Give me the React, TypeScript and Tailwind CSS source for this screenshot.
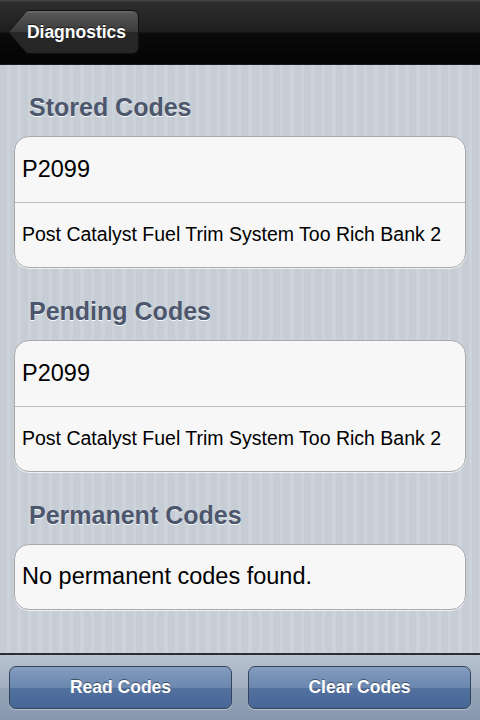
import React from "react";

const font = { fontFamily: '"Liberation Sans", Arial, sans-serif' };

function Section({ title, rows, first }: { title: string; rows: { text: string; size: "big" | "small" }[]; first?: boolean }) {
  const single = rows.length === 1;
  return (
    <div className="flex flex-col">
      <div className={`${first ? "h-[71px] pt-[28px]" : "h-[72px] pt-[29px]"} flex items-start pl-[29px]`}>
        <span className="text-[25px] leading-[28px] font-bold text-[#4c566c] [text-shadow:0_1px_0_rgba(255,255,255,0.9)]">{title}</span>
      </div>
      <div className="mx-[14px] rounded-[15px] border border-[#a7aaae] bg-[#f7f7f7] shadow-[0_1px_0_rgba(255,255,255,0.7)] overflow-hidden">
        {rows.map((r, i) => (
          <div
            key={i}
            className={`${i > 0 ? "h-[65px] border-t border-[#bcbcbc]" : single ? "h-[64px]" : "h-[65px]"} flex items-center pl-[7px] text-black ${r.size === "big" ? "text-[23.5px]" : "text-[19.5px]"}`}
          >
            {r.text}
          </div>
        ))}
      </div>
    </div>
  );
}

export default function App() {
  const desc = "Post Catalyst Fuel Trim System Too Rich Bank 2";
  return (
    <div style={font} className="w-[480px] h-[720px] flex flex-col overflow-hidden bg-[repeating-linear-gradient(90deg,#c6cdd5_0px,#c6cdd5_7px,#ccd3da_7px,#ccd3da_10.5px)]">
      {/* Nav bar */}
      <div className="h-[65px] shrink-0 flex items-center pl-[8px] border-b border-[#1a1a1a] bg-[linear-gradient(180deg,#4a4a4a_0px,#2e2e2e_2px,#1f1f1f_32px,#0b0b0b_33px,#030303_64px)]">
        <div className="relative w-[131px] h-[44px] flex items-center justify-center">
          <svg className="absolute inset-0" width="131" height="44" viewBox="0 0 131 44">
            <defs>
              <linearGradient id="bb" x1="0" y1="0" x2="0" y2="1">
                <stop offset="0" stopColor="#5a5a5a" />
                <stop offset="0.5" stopColor="#3a3a3a" />
                <stop offset="0.5" stopColor="#272727" />
                <stop offset="1" stopColor="#262626" />
              </linearGradient>
            </defs>
            <path
              d="M0.5 22 L18 1.5 Q19 0.5 21 0.5 L124 0.5 Q130.5 0.5 130.5 7 L130.5 37 Q130.5 43.5 124 43.5 L21 43.5 Q19 43.5 18 42.5 Z"
              fill="url(#bb)"
              stroke="#111"
              strokeWidth="1"
            />
            <path d="M19 2 L124 2" stroke="rgba(255,255,255,0.15)" strokeWidth="1" />
          </svg>
          <span className="relative pl-[6px] text-white font-bold text-[17.5px] [text-shadow:0_-1px_0_rgba(0,0,0,0.6)]">Diagnostics</span>
        </div>
      </div>

      {/* Content */}
      <div className="flex-1 flex flex-col">
        <Section first title="Stored Codes" rows={[{ text: "P2099", size: "big" }, { text: desc, size: "small" }]} />
        <Section title="Pending Codes" rows={[{ text: "P2099", size: "big" }, { text: desc, size: "small" }]} />
        <Section title="Permanent Codes" rows={[{ text: "No permanent codes found.", size: "big" }]} />
      </div>

      {/* Toolbar */}
      <div className="h-[67px] shrink-0 border-t-2 border-[#2c2f33] flex items-start gap-[16px] px-[9px] pt-[11px] bg-[linear-gradient(180deg,#b7c2cf_0%,#a3b0c0_50%,#96a5b8_50%,#8798af_100%)]">
        {["Read Codes", "Clear Codes"].map((t) => (
          <div
            key={t}
            className="flex-1 h-[43px] rounded-[7px] border border-[#34445c] flex items-center justify-center text-white font-bold text-[17.5px] [text-shadow:0_-1px_0_rgba(0,0,0,0.45)] shadow-[0_1px_0_rgba(255,255,255,0.35)] bg-[linear-gradient(180deg,#839cbf_0%,#6b87ae_50%,#52719f_50%,#476797_100%)]"
          >
            {t}
          </div>
        ))}
      </div>
    </div>
  );
}
